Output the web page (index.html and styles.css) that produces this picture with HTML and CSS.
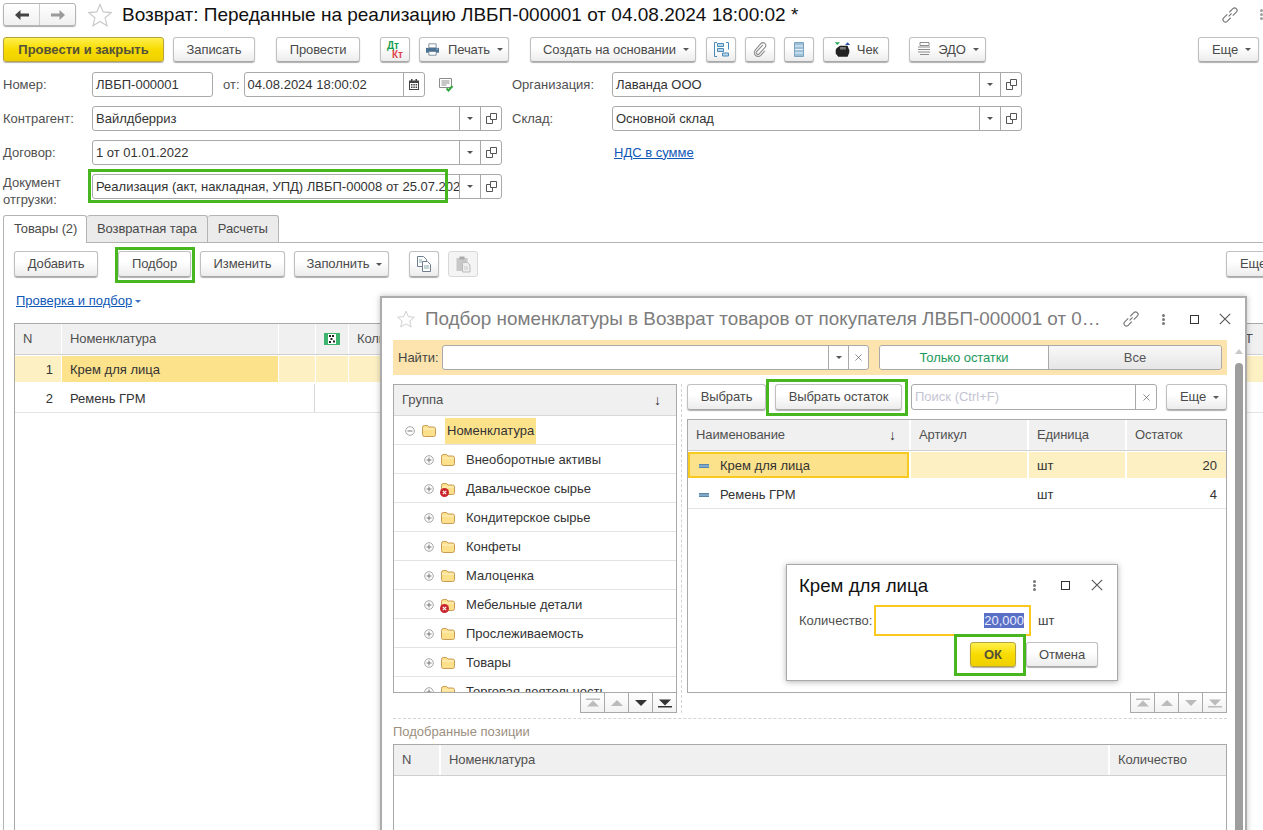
FILE: index.html
```html
<!DOCTYPE html>
<html lang="ru">
<head>
<meta charset="utf-8">
<title>Возврат</title>
<link rel="stylesheet" href="styles.css">
</head>
<body>
<svg class="defs" width="0" height="0" aria-hidden="true">
  <symbol id="star" viewBox="0 0 24 24"><path d="M12 1.500l3.200 7.400 8 .7-6.100 5.200 1.900 7.900L12 18.500l-7 4.200 1.900-7.900L.8 9.600l8-.7z" fill="#fff" stroke="#c9c9c9" stroke-width="1.200"/></symbol>
  <symbol id="open" viewBox="0 0 11 11"><path d="M4.500 .5h6v6h-6zM4.500 3.500H.5v7h6V6.500" fill="none" stroke="#555" stroke-width="1"/></symbol>
  <symbol id="link" viewBox="1 1 14 14"><path d="M6.800 9.200l2.600-2.600M5.600 7.400L2.500 10.500a2.100 2.100 0 0 0 3 3l3.100-3.100M7.400 5.600l3.100-3.100a2.100 2.100 0 0 1 3 3l-3.100 3.100" fill="none" stroke="#777" stroke-width="1"/></symbol>
  <symbol id="x" viewBox="0 0 12 12"><path d="M.8.8l10.400 10.400M11.200.8L.8 11.200" fill="none" stroke="#555" stroke-width="1.100"/></symbol>
  <symbol id="folder" viewBox="0 0 14 12"><path d="M.5 2.500q0-2 2-2h3l1.500 1.500h4.500q2 0 2 2v5.500q0 2-2 2h-9q-2 0-2-2z" fill="#fde08c" stroke="#c99a52"/><path d="M1 4h12" stroke="#fff3c8"/></symbol>
  <symbol id="bad" viewBox="0 0 9 9"><circle cx="4.500" cy="4.500" r="4.500" fill="#c9252c"/><path d="M2.800 2.800l3.400 3.400M6.200 2.800L2.800 6.200" stroke="#fff" stroke-width="1.100"/></symbol>
  <symbol id="plus" viewBox="0 0 10 10"><circle cx="5" cy="5" r="4.300" fill="#fff" stroke="#a5a5a5"/><path d="M2.500 5h5M5 2.500v5" stroke="#777"/></symbol>
  <symbol id="minus" viewBox="0 0 10 10"><circle cx="5" cy="5" r="4.300" fill="#fff" stroke="#a5a5a5"/><path d="M2.500 5h5" stroke="#777"/></symbol>
  <symbol id="pfirst" viewBox="0 0 16 10"><path d="M1 .5h14V2H1zM8 2.500l6 6H2z"/></symbol>
  <symbol id="pprev" viewBox="0 0 16 10"><path d="M8 2l6 6H2z"/></symbol>
  <symbol id="pnext" viewBox="0 0 16 10"><path d="M8 8L2 2h12z"/></symbol>
  <symbol id="plast" viewBox="0 0 16 10"><path d="M1 8h14v1.500H1zM8 7.500L2 1.500h12z"/></symbol>
  <symbol id="copy" viewBox="0 0 18 18"><path d="M2.500 1.500h6l3 3v7h-9z" fill="#fff" stroke="#6f7f8f"/><path d="M7.500 6.500h5l3 3v7h-8z" fill="#fff" stroke="#6f7f8f"/><path d="M9 11h5M9 13h5M4 5h3M4 7h3" stroke="#8aa"/></symbol>
  <symbol id="paste" viewBox="0 0 18 18"><path d="M2.500 3h11v13h-11z" fill="#c8c8c8"/><path d="M5.500 1.500h5v3h-5z" fill="#aaa"/><path d="M8.500 7.500h5l2.500 2.500v7h-7.500z" fill="#eee" stroke="#bbb"/><path d="M10 12h4M10 14h4" stroke="#ccc"/></symbol>
</svg>

<main class="form">
  <header class="head">
    <div class="nav">
      <span class="nav-b"><svg width="16" height="12" viewBox="0 0 16 12"><path d="M1 6l5.500-5v3.500H15v3H6.500V11z" fill="#444"/></svg></span>
      <span class="nav-b"><svg width="16" height="12" viewBox="0 0 16 12"><path d="M15 6L9.500 1v3.500H1v3h8.500V11z" fill="#9a9a9a"/></svg></span>
    </div>
    <svg class="star-big" width="24" height="24"><use href="#star"/></svg>
    <h1 class="title">Возврат: Переданные на реализацию ЛВБП-000001 от 04.08.2024 18:00:02 *</h1>
    <svg class="head-link" width="16" height="16"><use href="#link"/></svg>
    <span class="dots light"><i></i><i></i><i></i></span>
  </header>

  <div class="tb tb-main">
    <span class="btn yellow w161"><b>Провести и закрыть</b></span>
    <span class="btn w82 g9">Записать</span>
    <span class="btn w84 g21">Провести</span>
    <span class="btn w30 g20 dtkt"><span class="dt">Дт</span><span class="kt">Кт</span></span>
    <span class="btn w90 g9"><svg class="ic ic-pr" width="15" height="13" viewBox="0 0 18 16"><path d="M4.500 1h9v5h-9z" fill="#fff" stroke="#6a7d90"/><path d="M1 6h16v6H1z" fill="#4a7396"/><path d="M4.500 10.500h9V15h-9z" fill="#fff" stroke="#6a7d90"/><path d="M14 7.500h1.500" stroke="#fff"/></svg>Печать<i class="caret mk"></i></span>
    <span class="btn w166 g21 sft">Создать на основании<i class="caret mk"></i></span>
    <span class="btn w30 g10"><svg width="15" height="15" viewBox="0 0 15 15"><path d="M3 .5H.5v14H3M12 .5h2.500v7" fill="none" stroke="#4a8ab8"/><path d="M3.500 1.500h6v3h-6zM3.500 6.500h6v3h-6zM8.500 11h6v3h-6z" fill="#bcd7e8" stroke="#4a8ab8"/></svg></span>
    <span class="btn w30 g9"><svg width="14" height="15" viewBox="0 0 16 18"><path d="M11.500 3.500L4 11.500a2 2 0 0 0 3 2.800L14 6.500a3.300 3.300 0 0 0-5-4.500L2.500 9.500a4.500 4.500 0 0 0 6.500 6.500l5-5.500" fill="none" stroke="#8a8a8a" stroke-width="1.300"/></svg></span>
    <span class="btn w30 g9"><svg width="10" height="15" viewBox="0 0 10 15"><path d="M.5.500h9v14h-9z" fill="#9cc0d8" stroke="#7ba3bf"/><path d="M1 4h8M1 7.500h8M1 11h8" stroke="#e8f2f8" stroke-width="1"/></svg></span>
    <span class="btn w66 g9"><svg class="ic" width="17" height="16" viewBox="0 0 20 18"><path d="M1 0h6L4 3z" fill="#1faa55"/><path d="M13 3l3-3 3 3z" fill="#2d4fb0"/><path d="M3 7l4-3h9l1 3 1 2v3l-2 5H5l-3-4V9z" fill="#222"/><path d="M7 5.500h7v3H7z" fill="#777"/></svg>Чек</span>
    <span class="btn w77 g20"><svg class="ic" width="16" height="15" viewBox="0 0 16 15"><path d="M4 .5h9v3H4zM2 5h12M2 7.500h12M2 10h12M4 12.500h9" fill="none" stroke="#8d8d8d"/></svg>ЭДО<i class="caret mk"></i></span>
    <span class="btn w61 push sft">Еще<i class="caret mk"></i></span>
  </div>

  <section class="fields">
    <span class="lbl">Номер:</span>
    <div class="pair">
      <div class="fld num"><span class="val muted">ЛВБП-000001</span></div>
      <span class="lbl ot">от:</span>
      <div class="fld date"><span class="val">04.08.2024 18:00:02</span><span class="fb"><svg width="10" height="11" viewBox="0 0 10 11"><path d="M0 1.500h10V11H0z" fill="#444"/><path d="M1 4h8v6H1z" fill="#fff"/><path d="M2 5h1.500v1.500H2zM4.300 5h1.500v1.500H4.300zM6.600 5h1.500v1.500H6.600zM2 7.500h1.500V9H2zM4.300 7.500h1.500V9H4.300zM6.600 7.500h1.500V9H6.600z" fill="#444"/><path d="M2 0h1.500v2H2zM6.500 0H8v2H6.500z" fill="#444"/></svg></span></div>
      <svg class="ok-doc" width="15" height="14" viewBox="0 0 15 14"><path d="M.5.500h12v9H.5z" fill="#fff" stroke="#8c8c8c"/><path d="M2.500 3h8M2.500 5h8M2.500 7h5" stroke="#8c8c8c"/><path d="M7.500 10.500l2 2 4-4.500" fill="none" stroke="#2fa53a" stroke-width="2"/></svg>
    </div>
    <span class="lbl side">Организация:</span>
    <div class="fld"><span class="val">Лаванда ООО</span><span class="fb"><i class="caret"></i></span><span class="fb"><svg width="11" height="11"><use href="#open"/></svg></span></div>

    <span class="lbl">Контрагент:</span>
    <div class="fld"><span class="val">Вайлдберриз</span><span class="fb"><i class="caret"></i></span><span class="fb"><svg width="11" height="11"><use href="#open"/></svg></span></div>
    <span class="lbl side">Склад:</span>
    <div class="fld"><span class="val">Основной склад</span><span class="fb"><i class="caret"></i></span><span class="fb"><svg width="11" height="11"><use href="#open"/></svg></span></div>

    <span class="lbl">Договор:</span>
    <div class="fld"><span class="val">1 от 01.01.2022</span><span class="fb"><i class="caret"></i></span><span class="fb"><svg width="11" height="11"><use href="#open"/></svg></span></div>
    <span class="lbl"></span>
    <a class="lnk nds">НДС в сумме</a>

    <span class="lbl two">Документ<br>отгрузки:</span>
    <div class="fld"><span class="val">Реализация (акт, накладная, УПД) ЛВБП-00008 от 25.07.2024 18:00:00</span><span class="fb"><i class="caret"></i></span><span class="fb"><svg width="11" height="11"><use href="#open"/></svg></span></div>
  </section>

  <nav class="tabs">
    <span class="tab on">Товары (2)</span>
    <span class="tab">Возвратная тара</span>
    <span class="tab">Расчеты</span>
  </nav>

  <section class="panel">
    <div class="tb tb-goods">
      <span class="btn w84">Добавить</span>
      <span class="btn w73 g20">Подбор</span>
      <span class="btn w85 g9">Изменить</span>
      <span class="btn w95 g9 sft">Заполнить<i class="caret mk"></i></span>
      <span class="btn w30 g20"><svg width="18" height="18"><use href="#copy"/></svg></span>
      <span class="btn w30 g9 off"><svg width="18" height="18"><use href="#paste"/></svg></span>
      <span class="btn w61 far sft">Еще<i class="caret mk"></i></span>
    </div>
    <p class="check"><a class="lnk">Проверка и подбор</a><i class="caret blue"></i></p>
    <div class="table goods">
      <div class="hd">
        <span>N</span><span>Номенклатура</span><span></span>
        <span class="bar"><svg width="16" height="12" viewBox="0 0 16 12"><path d="M0 0h16v12H0z" fill="#3cb46e"/><path d="M4 1h8v10H4z" fill="#fff"/><path d="M5 2h2v2H5zM8 2h2v2H8zM6.500 5h2v2h-2zM5 8h2v2H5zM9 7.500h2v2H9z" fill="#222"/></svg></span>
        <span>Количество</span><span class="t-end">Т</span>
      </div>
      <div class="rw sel"><span class="n">1</span><span class="cur">Крем для лица</span><span></span><span></span><span></span><span></span></div>
      <div class="rw"><span class="n">2</span><span>Ремень ГРМ</span><span class="vl"></span><span></span><span></span><span></span></div>
    </div>
  </section>
</main>

<section class="picker">
  <header class="p-head">
    <svg width="18" height="18"><use href="#star"/></svg>
    <h2 class="p-title">Подбор номенклатуры в Возврат товаров от покупателя ЛВБП-000001 от 04.08.2024 18:00:02</h2>
    <div class="win-ic">
      <svg width="16" height="16"><use href="#link"/></svg>
      <span class="dots"><i></i><i></i><i></i></span>
      <span class="sq"></span>
      <svg width="12" height="12"><use href="#x"/></svg>
    </div>
  </header>
  <div class="p-body">
    <div class="p-main">
      <div class="find">
        <span class="find-l">Найти:</span>
        <div class="fld find-f"><span class="val"></span><span class="fb w20"><i class="caret"></i></span><span class="fb w20"><svg width="7" height="7"><use href="#x"/></svg></span></div>
        <div class="seg"><span class="seg-on">Только остатки</span><span class="seg-off">Все</span></div>
      </div>

      <div class="split">
        <div class="left">
          <div class="tree">
            <div class="tree-h"><span>Группа</span><span class="sort">↓</span></div>
            <div class="tr l1"><svg width="10" height="10"><use href="#minus"/></svg><svg class="fo" width="14" height="12"><use href="#folder"/></svg><span class="tn cur">Номенклатура</span></div>
            <div class="tr"><svg width="10" height="10"><use href="#plus"/></svg><svg class="fo" width="14" height="12"><use href="#folder"/></svg><span class="tn">Внеоборотные активы</span></div>
            <div class="tr"><svg width="10" height="10"><use href="#plus"/></svg><span class="fo-wrap"><svg class="fo" width="14" height="12"><use href="#folder"/></svg><svg class="bad" width="9" height="9"><use href="#bad"/></svg></span><span class="tn">Давальческое сырье</span></div>
            <div class="tr"><svg width="10" height="10"><use href="#plus"/></svg><svg class="fo" width="14" height="12"><use href="#folder"/></svg><span class="tn">Кондитерское сырье</span></div>
            <div class="tr"><svg width="10" height="10"><use href="#plus"/></svg><svg class="fo" width="14" height="12"><use href="#folder"/></svg><span class="tn">Конфеты</span></div>
            <div class="tr"><svg width="10" height="10"><use href="#plus"/></svg><svg class="fo" width="14" height="12"><use href="#folder"/></svg><span class="tn">Малоценка</span></div>
            <div class="tr"><svg width="10" height="10"><use href="#plus"/></svg><span class="fo-wrap"><svg class="fo" width="14" height="12"><use href="#folder"/></svg><svg class="bad" width="9" height="9"><use href="#bad"/></svg></span><span class="tn">Мебельные детали</span></div>
            <div class="tr"><svg width="10" height="10"><use href="#plus"/></svg><svg class="fo" width="14" height="12"><use href="#folder"/></svg><span class="tn">Прослеживаемость</span></div>
            <div class="tr"><svg width="10" height="10"><use href="#plus"/></svg><svg class="fo" width="14" height="12"><use href="#folder"/></svg><span class="tn">Товары</span></div>
            <div class="tr"><svg width="10" height="10"><use href="#plus"/></svg><svg class="fo" width="14" height="12"><use href="#folder"/></svg><span class="tn">Торговая деятельность</span></div>
          </div>
          <div class="pager">
            <span class="pg dim"><svg width="16" height="10"><use href="#pfirst"/></svg></span>
            <span class="pg dim"><svg width="16" height="10"><use href="#pprev"/></svg></span>
            <span class="pg"><svg width="16" height="10"><use href="#pnext"/></svg></span>
            <span class="pg"><svg width="16" height="10"><use href="#plast"/></svg></span>
          </div>
        </div>
        <div class="right">
          <div class="tb tb-pick">
            <span class="btn w79">Выбрать</span>
            <span class="btn w127 g9">Выбрать остаток</span>
            <div class="fld search"><span class="val ph">Поиск (Ctrl+F)</span><span class="fb"><svg width="7" height="7"><use href="#x"/></svg></span></div>
            <span class="btn w61 g9 sft">Еще<i class="caret mk"></i></span>
          </div>
          <div class="table items">
            <div class="hd"><span class="hsort">Наименование<em class="sort">↓</em></span><span>Артикул</span><span>Единица</span><span>Остаток</span></div>
            <div class="rw sel"><span class="cur"><i class="dash"></i>Крем для лица</span><span></span><span>шт</span><span class="rt">20</span></div>
            <div class="rw"><span><i class="dash"></i>Ремень ГРМ</span><span></span><span>шт</span><span class="rt">4</span></div>
          </div>
          <div class="pager">
            <span class="pg dim"><svg width="16" height="10"><use href="#pfirst"/></svg></span>
            <span class="pg dim"><svg width="16" height="10"><use href="#pprev"/></svg></span>
            <span class="pg dim"><svg width="16" height="10"><use href="#pnext"/></svg></span>
            <span class="pg dim"><svg width="16" height="10"><use href="#plast"/></svg></span>
          </div>
        </div>
      </div>

      <h3 class="picked-t">Подобранные позиции</h3>
      <div class="table picked">
        <div class="hd"><span>N</span><span>Номенклатура</span><span>Количество</span></div>
      </div>
    </div>
    <div class="scroll"><i class="up"></i><i class="thumb"></i></div>
  </div>
</section>

<section class="dialog">
  <header class="d-head">
    <h2 class="d-title">Крем для лица</h2>
    <span class="dots"><i></i><i></i><i></i></span>
    <span class="sq"></span>
    <svg width="12" height="12"><use href="#x"/></svg>
  </header>
  <div class="d-row">
    <span class="lbl">Количество:</span>
    <div class="qty"><span class="qty-v">20,000</span></div>
    <span class="unit">шт</span>
  </div>
  <div class="d-act">
    <span class="btn yellow w46"><b>ОК</b></span>
    <span class="btn w72 g10">Отмена</span>
  </div>
</section>

<span class="mark m-doc"></span>
<span class="mark m-pod"></span>
<span class="mark m-ost"></span>
<span class="mark m-ok"></span>
</body>
</html>
```
FILE: styles.css
```css
* { box-sizing: border-box; }
html, body { margin: 0; padding: 0; }
body {
  position: relative;
  width: 1263px;
  height: 830px;
  overflow: hidden;
  background: #fff;
  font: 13px/16px "Liberation Sans", Arial, sans-serif;
  color: #404040;
}
.defs { position: absolute; }
h1, h2, h3, p { margin: 0; font-weight: normal; }

/* main form */
.form { padding: 3px 0 0 3px; height: 830px; display: flex; flex-direction: column; }
.head { flex: none; display: flex; align-items: center; height: 23px; }
.nav { display: flex; width: 73px; height: 23px; border: 1px solid #b5b5b5; border-radius: 3px; box-shadow: 0 1px 1px #aaa; background: linear-gradient(#fff, #f0f0f0); }
.nav-b { flex: 1; display: flex; align-items: center; justify-content: center; }
.nav-b + .nav-b { border-left: 1px solid #ccc; }
.star-big { margin-left: 12px; }
.title { margin-left: 10px; flex: 1; font-size: 19px; line-height: 22px; color: #111; white-space: nowrap; }
.head-link { margin-right: 22px; }
.dots { display: inline-flex; flex-direction: column; gap: 1px; width: 3px; }
.dots i { width: 3px; height: 3px; border-radius: 50%; background: #777; }
.dots.light i { background: #a0a0a0; }

.tb { display: flex; }
.tb-main { flex: none; margin-top: 11px; height: 25px; padding-right: 4px; }
.btn {
  flex: none;
  display: inline-flex; align-items: center; justify-content: center;
  height: 25px;
  border: 1px solid #c0c0c0;
  border-bottom-color: #a8a8a8;
  border-radius: 3px;
  background: linear-gradient(#fff 40%, #ececec);
  box-shadow: 0 1px 1px #b0b0b0;
  color: #4a4a4a;
  letter-spacing: -.1px;
  white-space: nowrap;
}
.btn b { color: #54513a; letter-spacing: 0; }
.sft { padding-left: 6px; }
.yellow { background: linear-gradient(#fff04d, #f8db00 50%, #efd000); border-color: #b8a23c; }
.off { box-shadow: none; background: #f4f4f4; border-color: #d8d8d8; }
.w30 { width: 30px; } .w46 { width: 46px; } .w61 { width: 61px; } .w66 { width: 66px; } .w72 { width: 72px; }
.w73 { width: 73px; } .w77 { width: 77px; } .w79 { width: 79px; } .w82 { width: 82px; } .w84 { width: 84px; }
.w85 { width: 85px; } .w90 { width: 90px; } .w95 { width: 95px; } .w127 { width: 127px; } .w161 { width: 161px; } .w166 { width: 166px; }
.g9 { margin-left: 9px; } .g10 { margin-left: 10px; } .g20 { margin-left: 20px; } .g21 { margin-left: 21px; }
.push { margin-left: auto; }
.ic { margin-right: 6px; }
.ic-pr { margin-right: 8px; }
.caret { display: inline-block; width: 0; height: 0; border: 3px solid transparent; border-top: 3.5px solid #555; border-bottom: 0; }
.mk { margin-left: 7px; }
.dtkt { display: flex; flex-direction: column; align-items: flex-start; justify-content: center; padding-left: 6px; font-size: 10px; line-height: 9px; font-weight: bold; letter-spacing: 0; }
.dt { color: #17a050; }
.kt { color: #e0474c; margin-left: 5px; }

/* fields */
.fields {
  flex: none;
  display: grid;
  grid-template-columns: 89px 410px 110px 410px;
  grid-auto-rows: 25px;
  row-gap: 9px;
  margin-top: 10px;
}
.lbl { align-self: center; color: #505050; white-space: nowrap; }
.side { margin-left: 10px; }
.two { align-self: start; line-height: 17px; }
.pair { display: flex; align-items: center; }
.num { width: 121px; border-color: #dcdcdc; }
.muted { color: #505050; }
.ot { margin-left: 10px; }
.date { width: 181px; margin-left: 4px; }
.ok-doc { margin-left: 14px; }
.fld { display: flex; height: 25px; border: 1px solid #a9a9a9; border-radius: 3px; background: #fff; }
.val { flex: 1; min-width: 0; padding: 0 3px; line-height: 23px; color: #333; white-space: nowrap; overflow: hidden; }
.fb { flex: none; width: 21px; display: flex; align-items: center; justify-content: center; border-left: 1px solid #a9a9a9; }
.lnk { color: #0f58b8; text-decoration: underline; }
.nds { align-self: center; margin-left: 2px; }

/* tabs */
.tabs { flex: none; display: flex; margin-top: 16px; height: 27px; }
.tab { height: 27px; padding: 0 10px; line-height: 25px; border: 1px solid #b4b4b4; border-left: 0; border-bottom: 0; border-radius: 3px 3px 0 0; background: #ebebeb; color: #4a4a4a; letter-spacing: -.1px; white-space: nowrap; }
.tab.on { width: 84px; border-left: 1px solid #b4b4b4; background: #fff; position: relative; height: 28px; z-index: 1; }
.panel { flex: 1; min-height: 0; display: flex; flex-direction: column; border-left: 1px solid #b4b4b4; border-top: 1px solid #b4b4b4; padding: 8px 0 0 10px; }
.tb-goods { flex: none; height: 26px; }
.tb-goods .btn { height: 26px; }
.far { margin-left: 748px; }
.check { flex: none; margin-top: 16px; margin-left: 2px; height: 16px; display: flex; align-items: center; gap: 3px; }
.blue { border-top-color: #3a72c0; border-width: 3px; border-top-width: 3px; margin-left: 0; }

/* tables */
.table { border: 1px solid #a9a9a9; }
.hd, .rw { display: grid; column-gap: 2px; }
.hd { height: 31px; border-bottom: 1px solid #d0d0d0; letter-spacing: -.1px; }
.hd > span { display: flex; align-items: center; padding-left: 8px; background: #f0f0f0; color: #505050; white-space: nowrap; overflow: hidden; }
.rw { height: 29px; border-bottom: 1px solid #e3e3e3; color: #333; align-items: stretch; }
.rw > span { display: flex; align-items: center; padding: 1px 0 0 8px; white-space: nowrap; }
.rw.sel { height: 26px; margin: 1px 0 2px; border-bottom: 0; }
.sel > span { background: #fdf1c4; }
.sel > span.cur { background: #fde28c; }
.rw > .n { justify-content: flex-end; padding: 1px 8px 0 0; }
.rw > .rt { justify-content: flex-end; padding: 1px 9px 0 0; }
.goods { flex: 1; width: 1300px; border-right: 0; border-bottom: 0; margin-top: 14px; }
.goods .hd, .goods .rw { grid-template-columns: 46px 216px 36px 32px 887px 60px; column-gap: 1px; }
.goods .hd > span:nth-child(4) { justify-content: center; padding: 0; }
.goods .vl { border-right: 1px solid #d8d8d8; }

/* picker window */
.picker {
  position: absolute; left: 380px; top: 296px; width: 867px; height: 560px;
  background: #fff; border: 2px solid #acacac;
  box-shadow: 0 0 6px rgba(0, 0, 0, .25);
  overflow: hidden;
}
.p-head { display: flex; align-items: center; height: 42px; padding: 0 14px 0 15px; }
.p-title { width: 678px; margin-left: 10px; font-size: 18.85px; line-height: 22px; color: #7c7c7c; white-space: nowrap; overflow: hidden; text-overflow: ellipsis; }
.win-ic { display: flex; align-items: center; margin-left: 21px; }
.win-ic .dots { margin-left: 23px; }
.win-ic .sq { margin-left: 25px; }
.win-ic svg:last-child { margin-left: 20px; }
.sq { width: 9px; height: 9px; border: 1px solid #333; }
.p-body { display: flex; padding-left: 11px; }
.p-main { width: 834px; flex: none; }
.find { display: flex; align-items: center; height: 35px; padding: 0 5px; background: #fde4ae; }
.find-l { width: 44px; color: #444; }
.find-f { width: 427px; }
.w20 { width: 20px; }
.seg { display: flex; width: 343px; height: 25px; margin-left: 10px; border: 1px solid #a9a9a9; border-radius: 3px; overflow: hidden; }
.seg-on { width: 169px; text-align: center; line-height: 23px; background: #fff; color: #1b9a5a; border-right: 1px solid #a9a9a9; letter-spacing: -.1px; }
.seg-off { flex: 1; text-align: center; line-height: 23px; background: linear-gradient(#f8f8f8, #e6e6e6); color: #555; }
.split { display: flex; margin-top: 9px; height: 329px; }
.left { width: 289px; flex: none; border-right: 1px dashed #d4d4d4; }
.tree { width: 284px; height: 309px; border: 1px solid #a9a9a9; overflow: hidden; }
.tree-h { display: flex; justify-content: space-between; align-items: center; height: 31px; padding: 0 15px 0 8px; background: #f0f0f0; color: #505050; border-bottom: 1px solid #d8d8d8; }
.sort { font-style: normal; font-size: 14px; color: #333; }
.tr { display: flex; align-items: center; height: 29px; flex: none; padding: 1px 0 0 30px; border-bottom: 1px solid #e3e3e3; color: #333; }
.tr.l1 { padding-left: 11px; }
.fo { margin-left: 7px; flex: none; }
.fo-wrap { position: relative; display: flex; }
.bad { position: absolute; left: 6px; top: 5px; }
.tn { margin-left: 11px; white-space: nowrap; }
.tn.cur { margin-left: 9px; padding: 0 2px; height: 26px; line-height: 26px; background: #fde28c; }
.pager { display: flex; justify-content: flex-end; width: 284px; }
.right .pager { width: 540px; }
.pg { width: 24px; height: 20px; display: flex; align-items: center; justify-content: center; border: 1px solid #a9a9a9; border-top: 0; border-right: 0; fill: #333; background: linear-gradient(#fff, #f2f2f2); }
.pg:last-child { width: 25px; border-right: 1px solid #a9a9a9; }
.pg.dim { fill: #bbb; }
.right { width: 540px; margin-left: 5px; flex: none; }
.tb-pick { height: 26px; }
.tb-pick .btn { height: 26px; }
.search { width: 246px; height: 26px; margin-left: 9px; }
.ph { color: #c4c4d2; }
.items { margin-top: 9px; height: 274px; }
.items .hd, .items .rw { grid-template-columns: 221px 116px 96px 1fr; }
.hsort { justify-content: space-between; padding-right: 13px; }
.items .sel > .cur { box-shadow: inset 0 0 0 2px #f8c91f; }
.items .rw > span:first-child { padding-left: 11px; }
.dash { display: inline-block; width: 10px; height: 4px; margin-right: 11px; background: #7da8cc; border: 1px solid #5c86a8; border-width: 1px 0; }
.picked-t { margin-top: 5px; padding: 5px 0 4px; border-top: 1px dashed #d4d4d4; font-size: 13px; line-height: 16px; color: #9b8f80; }
.picked { height: 100px; }
.picked .hd { grid-template-columns: 45px 667px 1fr; }
.scroll { width: 8px; flex: none; margin-left: 8px; display: flex; flex-direction: column; align-items: center; }
.up { margin-top: 9px; border: 4px solid transparent; border-bottom: 5px solid #c8c8c8; border-top: 0; }
.thumb { display: block; margin-top: 9px; width: 8px; height: 500px; border-radius: 4px 4px 0 0; background: #9e9e9e; }

/* quantity dialog */
.dialog {
  position: absolute; left: 786px; top: 564px; width: 332px; height: 117px;
  padding: 0 14px 0 12px;
  background: #fff; border: 1px solid #a9a9a9;
  box-shadow: 0 1px 6px rgba(0, 0, 0, .3);
}
.d-head { display: flex; align-items: center; height: 40px; }
.d-title { flex: 1; margin-top: 2px; font-size: 18.67px; line-height: 22px; color: #111; }
.d-head .sq { margin-left: 25px; }
.d-head svg { margin-left: 21px; }
.d-row { display: flex; align-items: center; height: 31px; }
.d-row .lbl { width: 75px; }
.qty { width: 157px; height: 31px; border: 2px solid #fbc91e; padding-right: 5px; display: flex; align-items: center; justify-content: flex-end; }
.qty-v { background: #5a6fc6; color: #e8ecff; line-height: 15px; }
.unit { margin-left: 7px; color: #404040; }
.d-act { display: flex; justify-content: flex-end; margin: 6px 5px 0 0; }

/* annotation frames */
.mark { position: absolute; border: 3px solid #48b61e; pointer-events: none; }
.m-doc { left: 88px; top: 169px; width: 360px; height: 34px; }
.m-pod { left: 115px; top: 247px; width: 80px; height: 36px; }
.m-ost { left: 766px; top: 379px; width: 142px; height: 37px; }
.m-ok { left: 954px; top: 634px; width: 72px; height: 42px; }
```
